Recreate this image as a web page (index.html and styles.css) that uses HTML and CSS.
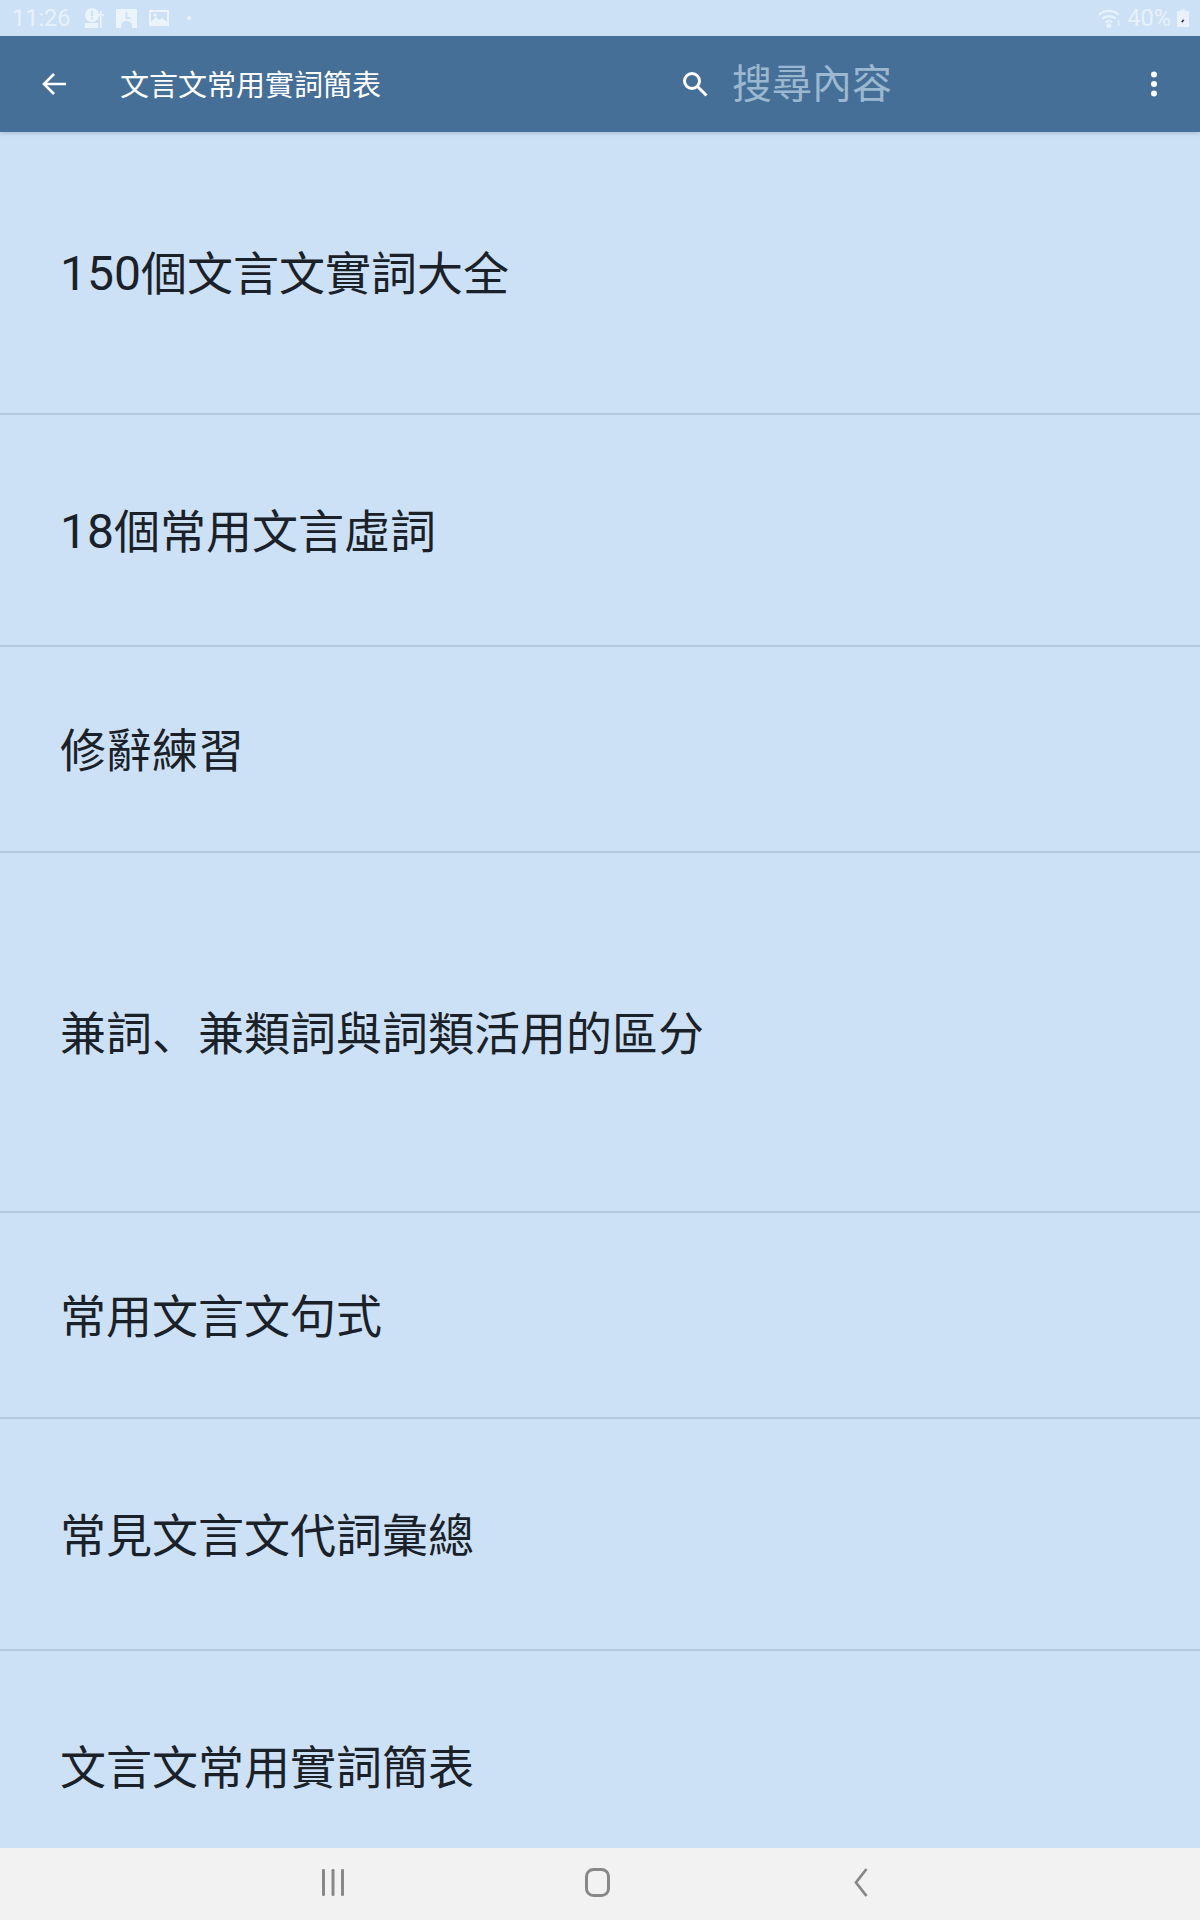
FILE: index.html
```html
<!DOCTYPE html>
<html lang="zh">
<head>
<meta charset="utf-8">
<title>文言文常用實詞簡表</title>
<link rel="stylesheet" href="styles.css">
</head>
<body>
<div class="screen">
  <header class="status">
    <div class="status-left">
      <span class="time">11:26</span>
      <svg class="si si-alert" viewBox="0 0 20 20"><circle cx="8" cy="7" r="7" fill="#ecf4fb"/><rect x="7" y="2.500" width="2" height="5.500" fill="#cde1f6"/><rect x="7" y="9.500" width="2" height="2" fill="#cde1f6"/><rect x="1" y="15" width="13" height="5" fill="#ecf4fb"/><rect x="16" y="3" width="1.600" height="17" fill="#ecf4fb"/><rect x="14" y="6" width="6" height="1.600" fill="#ecf4fb"/></svg>
      <svg class="si si-contact" viewBox="0 0 21 19"><path d="M0 0h21v19h-5v-3a5.500 4 0 0 0-11 0v3H0z" fill="#ecf4fb"/><path d="M9.500 3h2v5h3v2h-5z" fill="#cde1f6"/></svg>
      <svg class="si si-image" viewBox="0 0 20 16"><path fill-rule="evenodd" d="M0 0h20v16H0zM2 2v12h16V2z" fill="#ecf4fb"/><path d="M2 12l5-5 3 3 3-2 5 4v2H2z" fill="#ecf4fb"/><circle cx="6" cy="5" r="1.600" fill="#ecf4fb"/></svg>
      <span class="dot"></span>
    </div>
    <div class="status-right">
      <svg class="si si-wifi" viewBox="0 0 22 18" fill="none" stroke="#e8f2fb" stroke-width="2"><path d="M1 6a13 13 0 0 1 18 0M4 9.500a9 9 0 0 1 12 0M7 13a4.500 4.500 0 0 1 6 0"/><circle cx="10" cy="16" r="1.200" fill="#e8f2fb"/><path d="M19 11v5" stroke-width="1.200"/></svg>
      <span class="battery-text">40%</span>
      <svg class="si si-battery" viewBox="0 0 12 18"><rect x="3.500" y="0" width="5" height="2" fill="#dfeaf6"/><rect x="0" y="2" width="12" height="16" fill="#e9f2fa"/><path d="M7 9l-3 4 1.500 0-1 2 3-4H6z" fill="#333"/></svg>
    </div>
  </header>

  <div class="appbar">
    <svg class="ic-back" viewBox="0 0 24 24" fill="none" stroke="#fff" stroke-width="2.600"><path d="M24 12H2.500M12 2l-10 10 10 10"/></svg>
    <h1 class="title">文言文常用實詞簡表</h1>
    <div class="search">
      <svg class="ic-search" viewBox="0 0 26 26" fill="none" stroke="#fff" stroke-width="3"><circle cx="10" cy="10" r="7.500"/><path d="M15.500 15.500L24.500 24.500"/></svg>
      <span class="placeholder">搜尋內容</span>
    </div>
    <svg class="ic-more" viewBox="0 0 8 26" fill="#fff"><circle cx="4" cy="3.500" r="3"/><circle cx="4" cy="13" r="3"/><circle cx="4" cy="22.500" r="3"/></svg>
  </div>

  <main class="list">
    <div class="row row-a"><span class="label"><span class="num">150</span>個文言文實詞大全</span></div>
    <div class="row row-b"><span class="label"><span class="num">18</span>個常用文言虛詞</span></div>
    <div class="row row-c"><span class="label">修辭練習</span></div>
    <div class="row row-d"><span class="label">兼詞、兼類詞與詞類活用的區分</span></div>
    <div class="row row-c"><span class="label">常用文言文句式</span></div>
    <div class="row row-b"><span class="label">常見文言文代詞彙總</span></div>
    <div class="row row-b"><span class="label">文言文常用實詞簡表</span></div>
  </main>

  <nav class="navbar">
    <svg class="nav-ic nav-recent" viewBox="0 0 22 27" fill="#888"><rect x="0" y="0" width="3" height="27" rx="1.200"/><rect x="9.500" y="0" width="3" height="27" rx="1.200"/><rect x="19" y="0" width="3" height="27" rx="1.200"/></svg>
    <svg class="nav-ic nav-home" viewBox="0 0 25 29" fill="none" stroke="#888" stroke-width="3"><rect x="1.500" y="1.500" width="22" height="26" rx="7"/></svg>
    <svg class="nav-ic nav-back" viewBox="0 0 14 29" fill="none" stroke="#888" stroke-width="2.800"><path d="M12.500 1L2 14.500 12.500 28"/></svg>
  </nav>
</div>
</body>
</html>
```

FILE: styles.css
```css
* { box-sizing: border-box; }
html, body { margin: 0; padding: 0; }
body {
  font-family: Roboto, "Noto Sans CJK SC", "Noto Sans CJK TC", sans-serif;
  background: #cde1f6;
}
.screen {
  width: 1200px;
  height: 1920px;
  display: flex;
  flex-direction: column;
  overflow: hidden;
  background: #cde1f6;
}
.status {
  height: 36px;
  flex: none;
  display: flex;
  align-items: center;
  justify-content: space-between;
  padding: 0 11px 0 12px;
  color: #e7f1fa;
  font-size: 23.5px;
}
.status-left, .status-right { display: flex; align-items: center; }
.time { margin-right: 13px; }
.si { display: block; flex: none; }
.si-alert { width: 20px; height: 20px; margin-right: 12px; }
.si-contact { width: 21px; height: 19px; margin-right: 12px; }
.si-image { width: 20px; height: 16px; margin-right: 18px; }
.dot { width: 4px; height: 4px; border-radius: 50%; background: #e7f1fa; }
.si-wifi { width: 24px; height: 20px; margin-right: 5px; }
.si-battery { width: 12px; height: 18px; margin-left: 6px; }
.appbar {
  height: 96px;
  flex: none;
  display: flex;
  align-items: center;
  padding-left: 42px;
  background: #466f97;
  box-shadow: 0 2px 3px rgba(40, 70, 100, .18);
  position: relative;
}
.ic-back { width: 24px; height: 24px; flex: none; margin-right: 54px; }
.title {
  margin: 0 0 2px;
  width: 562px;
  flex: none;
  color: #fff;
  font-size: 29px;
  font-weight: 400;
  white-space: nowrap;
}
.search { display: flex; align-items: center; flex: none; width: 468px; }
.ic-search { width: 26px; height: 26px; flex: none; margin-right: 24px; }
.placeholder { color: #9bb8d1; font-size: 40px; line-height: 1; margin-top: 2px; }
.ic-more { width: 8px; height: 26px; flex: none; }
.list { flex: 1; min-height: 0; overflow: hidden; }
.row {
  display: flex;
  align-items: center;
  padding: 0 0 5px 60px;
  color: #1a2129;
  font-size: 46px;
  border-bottom: 2px solid #b4c9dd;
  white-space: nowrap;
}
.num { font-size: 48px; }
.row-a { height: 283px; }
.row-b { height: 232px; }
.row-c { height: 206px; }
.row-d { height: 360px; }
.navbar {
  height: 72px;
  flex: none;
  background: #f2f2f2;
  display: grid;
  grid-template-columns: repeat(3, 264px);
  justify-items: center;
  align-items: center;
  padding: 0 0 3px 201px;
}
.nav-ic { display: block; }
.nav-recent { width: 22px; height: 27px; }
.nav-home { width: 25px; height: 29px; }
.nav-back { width: 14px; height: 29px; }
```
